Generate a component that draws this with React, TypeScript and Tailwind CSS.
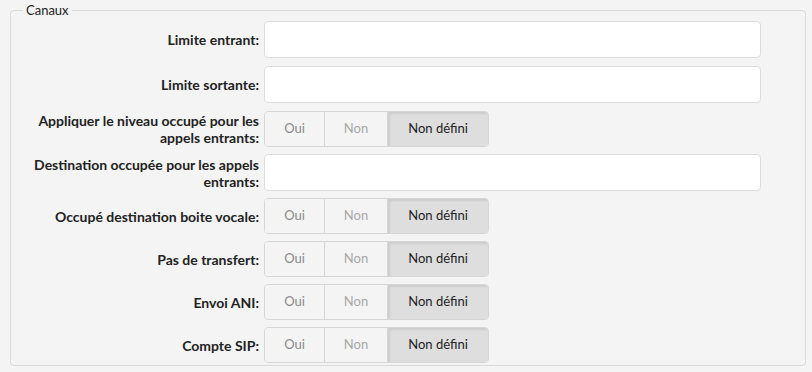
import React from 'react'

type Row =
  | { label: string; kind: 'input' }
  | { label: string; kind: 'toggle' }

const rows: Row[] = [
  { label: 'Limite entrant:', kind: 'input' },
  { label: 'Limite sortante:', kind: 'input' },
  { label: 'Appliquer le niveau occupé pour les appels entrants:', kind: 'toggle' },
  { label: 'Destination occupée pour les appels entrants:', kind: 'input' },
  { label: 'Occupé destination boite vocale:', kind: 'toggle' },
  { label: 'Pas de transfert:', kind: 'toggle' },
  { label: 'Envoi ANI:', kind: 'toggle' },
  { label: 'Compte SIP:', kind: 'toggle' },
]

function Toggle() {
  return (
    <div className="flex h-[36px] w-[225px] rounded-[4px] border border-[#d6d6d6] text-[13px] overflow-hidden">
      <button className="w-[60px] bg-[#f4f4f4] text-[#8a8a8a] border-r border-[#d6d6d6]">Oui</button>
      <button className="w-[63px] bg-[#f4f4f4] text-[#a8a8a8] border-r border-[#d6d6d6]">Non</button>
      <button className="flex-1 bg-[#dedede] text-[#222] shadow-[inset_2px_2px_2px_rgba(0,0,0,0.08)]">Non défini</button>
    </div>
  )
}

export default function App() {
  return (
    <div
      className="w-[812px] h-[372px] bg-[#f4f4f4] pl-[10px] pr-[6px] pt-[3px]"
      style={{ fontFamily: 'Lato, "Open Sans", sans-serif' }}
    >
      <fieldset className="border border-[#dadada] rounded-[4px] pl-[4px] pr-[44px] pb-[3px] h-[363px]">
        <legend className="ml-[8px] px-[3px] text-[13px] text-[#222] leading-[15px]">Canaux</legend>
        <div className="flex flex-col gap-[7px] mt-[3px]">
          {rows.map((r, i) => (
            <div key={r.label} className={i < 2 ? 'flex items-center gap-[5px] mb-[1px]' : 'flex items-center gap-[5px]'}>
              <div className="w-[244px] text-right text-[14px] font-bold text-[#222] leading-[17px]">
                {r.label}
              </div>
              {r.kind === 'input' ? (
                <div className="h-[37px] flex-1 bg-white border border-[#dcdcdc] rounded-[4px]" />
              ) : (
                <Toggle />
              )}
            </div>
          ))}
        </div>
      </fieldset>
    </div>
  )
}
